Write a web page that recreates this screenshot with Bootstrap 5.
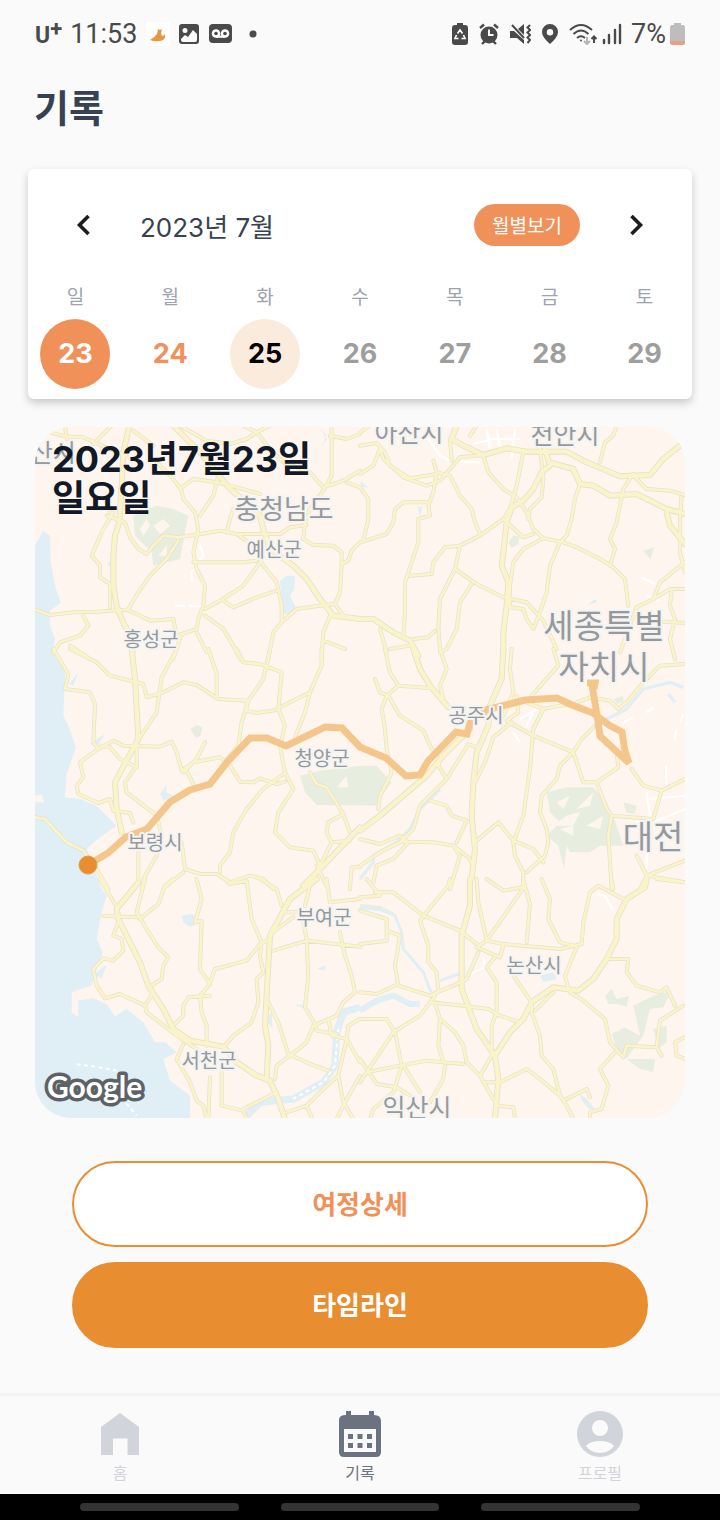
<!DOCTYPE html>
<html lang="ko">
<head>
<meta charset="utf-8">
<meta name="viewport" content="width=device-width, initial-scale=1">
<title>기록</title>
<link href="https://cdn.jsdelivr.net/npm/bootstrap@5.3.0/dist/css/bootstrap.min.css" rel="stylesheet">
<style>
  :root { --coral: #f0915a; --amber: #e88e31; --ink: #374151; --page: #fafafa; }
  body { background: var(--page); color: var(--ink); font-family: Inter, "Noto Sans CJK KR", sans-serif; }
  svg { display: block; flex: none; }
  .status-bar { height: 68px; padding: 0 35px; font: 400 27px/32px Roboto, sans-serif; color: #4a4a4a; }
  .carrier { font-size: 23px; font-weight: 700; line-height: 32px; padding-top: 4px; }
  .carrier sup { font-size: 22px; top: -7px; line-height: 0; }
  .page-title { font-size: 38px; font-weight: 700; line-height: 76px; padding: 2px 34px 0; }
  .week-card { margin: 23px 28px 0; padding: 28px 0 10px; border: 0; border-radius: 6px; box-shadow: 0 4px 9px rgba(0,0,0,.2); }
  .week-head { padding: 0 28px; gap: 28px; }
  .arrow-btn { width: 56px; height: 56px; padding: 0; display: grid; place-items: center; }
  .month-label { font-size: 26px; line-height: 32px; padding-top: 6px; }
  .month-btn { height: 42px; padding: 3px 18px 0; border: 0; border-radius: 21px; background: var(--coral); color: #fff; font-size: 19px; line-height: 39px; }
  .week-grid { table-layout: fixed; width: 100%; margin-top: 29px; text-align: center; }
  .week-grid th { font-size: 19px; font-weight: 400; line-height: 32px; padding: 0 0 5px; color: #9ca3af; }
  .week-grid td { padding: 0; }
  .day { width: 70px; height: 70px; padding: 0; border-radius: 50%; font-size: 27px; font-weight: 700; color: #9e9e9e; border: 0; }
  .day.chosen { background: var(--coral); color: #fff; }
  .day.past { color: var(--coral); }
  .day.today { background: #faebdc; color: #000; }
  .map-box { margin: 28px 35px 0; border-radius: 36px; overflow: hidden; }
  .map-box svg { width: 100%; height: auto; }
  .map-date { top: 13px; left: 17px; font-size: 36px; font-weight: 700; line-height: 39px; color: #111827; }
  .actions { padding: 43px 10% 0; gap: 15px; }
  .action-btn { height: 86px; border-radius: 43px; font-size: 26px; font-weight: 700; border: 2px solid var(--amber); background: #fff; color: var(--coral); }
  .action-btn.filled { background: var(--amber); color: #fff; }
  .tab-bar { border-top: 3px solid #f3f3f3; height: 101px; }
  .tab-link { color: #d1d5db; font-size: 16px; line-height: 24px; text-decoration: none; padding-top: 12px; gap: 3px; }
  .tab-link.current { color: #6b7280; }
  .sys-bar { background: #000; height: 26px; gap: 42px; }
  .sys-bar span { width: 22%; height: 8px; border-radius: 4px; background: #333; }
  /* map layers */
  .land { fill: #fef6ee; } .sea, .lake { fill: #e0eef5; } .park { fill: #e7eedf; }
  .river { fill: none; stroke: #e0eef5; stroke-linejoin: round; }
  .street { fill: none; stroke: #fff; stroke-width: 6; }
  .roads { fill: none; stroke-linejoin: round; stroke-linecap: round; }
  .casing { stroke: #e6dfcb; --minor: 12px; --major: 18px; }
  .surface { stroke: #faf4c8; --minor: 8px; --major: 13px; }
  .lane { stroke-width: var(--minor); } .trunk { stroke-width: var(--major); }
  .trip { fill: none; stroke: #f5c68b; stroke-width: 7; }
  .places { font-family: "Noto Sans CJK KR", sans-serif; fill: #98989b; stroke: #f3f4f4; stroke-width: 4; paint-order: stroke; text-anchor: middle; stroke-linejoin: round; }
  .p-s { font-size: 20px; } .p-m { font-size: 25px; } .p-l { font-size: 27px; } .p-xl { font-size: 33px; }
  .maker { font-family: Lato, sans-serif; font-weight: 700; font-size: 30px; fill: #fff; stroke: #5d6266; stroke-width: 7; paint-order: stroke; stroke-linejoin: round; }
</style>
</head>
<body>
<div class="d-flex flex-column min-vh-100">
  <div class="status-bar d-flex align-items-center justify-content-between">
    <div class="d-flex align-items-center">
      <span class="carrier">U<sup>+</sup></span><span class="ms-2">11:53</span>
      <svg class="ms-2" width="26" height="26" viewBox="0 0 26 26"><rect x="1" y="1" width="24" height="24" fill="#fff"/><path d="M5 19q5-3 7-6l1-5 2 1 2-1-1 4 1 3q2 0 3-2 1 6-5 7-5 1-10-1Z" fill="#e8963f"/></svg>
      <svg class="ms-2" width="20" height="20" viewBox="0 0 20 20"><path fill="#4a4a4a" fill-rule="evenodd" d="M3 0h14q3 0 3 3v14q0 3-3 3H3q-3 0-3-3V3q0-3 3-3Zm3 4a2 2 0 1 0 0 5 2 2 0 0 0 0-5ZM2 16q0 2 2 2h12q2 0 2-2V10l-4-4-5 7-3-2-4 4Z"/></svg>
      <svg class="ms-2" width="26" height="20" viewBox="-2 0 26 20"><rect width="23" height="19" rx="4" fill="#4a4a4a"/><g fill="#fff"><circle cx="7" cy="9.500" r="4.300"/><circle cx="16" cy="9.500" r="4.300"/><path d="M7 11.500h9v2.300H7z"/></g><g fill="#4a4a4a"><circle cx="7" cy="9.500" r="1.800"/><circle cx="16" cy="9.500" r="1.800"/></g></svg>
      <svg class="ms-3" width="8" height="8" viewBox="0 0 8 8"><circle cx="4" cy="4" r="3.500" fill="#4a4a4a"/></svg>
    </div>
    <div class="d-flex align-items-center">
      <svg width="16" height="22" viewBox="0 0 16 22"><path fill="#4a4a4a" d="M5 0h6v2h2q3 0 3 3v14q0 3-3 3H3q-3 0-3-3V5q0-3 3-3h2Z"/><path d="m5.500 10.500 2.500-3.500 2.500 3.500m1 1.500 1.500 3.500H9.500m-3 0H3l1.500-3.500" fill="none" stroke="#fff" stroke-width="1.600"/></svg>
      <svg class="ms-2" width="26" height="22" viewBox="-4 0 26 22"><circle cx="9" cy="12" r="8.500" fill="#4a4a4a"/><path d="m0 5 4-3.500M18 5l-4-3.500M2 21l3-3M16 21l-3-3" stroke="#4a4a4a" stroke-width="2.400"/><path d="M9 6.500V12h4.500" stroke="#fff" stroke-width="2" fill="none"/></svg>
      <svg class="ms-2" width="21" height="22" viewBox="0 0 21 22"><path fill="#4a4a4a" d="M0 8h4l10 9v4l-7-6H0ZM8 6l6-5v11Z"/><path d="m2 2 12 13M20 2l-2.500 2.500L20 7l-2.500 2.500L20 12l-2.500 2.500L20 17l-2.500 3" stroke="#4a4a4a" stroke-width="2" fill="none"/></svg>
      <svg class="ms-2" width="22" height="22" viewBox="0 0 22 22"><path fill="#4a4a4a" fill-rule="evenodd" d="M11 1a8 8 0 0 1 8 8q0 5-8 12Q3 14 3 9a8 8 0 0 1 8-8Zm0 5a3 3 0 1 0 0 6.500A3 3 0 0 0 11 6Z"/></svg>
      <svg class="ms-2" width="28" height="22" viewBox="0 0 28 22" fill="none" stroke="#4a4a4a" stroke-width="2"><path d="M1 7q11-10 22 0M4.500 11q7.500-7 15 0M8 15q4-3.500 8 0"/><circle cx="12" cy="17.500" r="1" fill="#4a4a4a" stroke="none"/><path d="M18 14v6m-3-2 3 3 3-3" stroke="#b5b5b5"/><path d="M25 20v-6m-2.500 2 2.500-2.500 2.500 2.500"/></svg>
      <svg class="ms-1" width="22" height="22" viewBox="0 0 22 22"><path d="M3 17v3M8 12v8M14 7v13M19 2v18" stroke="#4a4a4a" stroke-width="2.400" stroke-linecap="round"/></svg>
      <span class="ms-2">7%</span>
      <svg class="ms-1" width="15" height="22" viewBox="0 0 15 22"><path fill="#bdbdbd" d="M4 0h7v2h2q2 0 2 3v14q0 3-3 3H3q-3 0-3-3V5q0-3 2-3h2Z"/><path fill="#e5a085" d="M0 18h15v1q0 3-3 3H3q-3 0-3-3Z"/></svg>
    </div>
  </div>

  <main class="flex-grow-1">
    <h1 class="page-title m-0">기록</h1>

    <section class="card week-card">
      <div class="week-head d-flex align-items-center">
        <button class="btn arrow-btn" type="button" aria-label="이전 주"><svg width="16" height="22" viewBox="0 0 16 22"><path d="m12.500 2-9 9 9 9" fill="none" stroke="#1c1c1e" stroke-width="3.600"/></svg></button>
        <div class="month-label flex-grow-1">2023년 7월</div>
        <button class="btn month-btn" type="button">월별보기</button>
        <button class="btn arrow-btn" type="button" aria-label="다음 주"><svg width="16" height="22" viewBox="0 0 16 22"><path d="m3.500 2 9 9-9 9" fill="none" stroke="#1c1c1e" stroke-width="3.600"/></svg></button>
      </div>
      <table class="week-grid">
        <thead><tr><th scope="col">일</th><th scope="col">월</th><th scope="col">화</th><th scope="col">수</th><th scope="col">목</th><th scope="col">금</th><th scope="col">토</th></tr></thead>
        <tbody><tr>
          <td><button class="btn day chosen" type="button">23</button></td>
          <td><button class="btn day past" type="button">24</button></td>
          <td><button class="btn day today" type="button">25</button></td>
          <td><button class="btn day" type="button">26</button></td>
          <td><button class="btn day" type="button">27</button></td>
          <td><button class="btn day" type="button">28</button></td>
          <td><button class="btn day" type="button">29</button></td>
        </tr></tbody>
      </table>
    </section>

    <section class="map-box position-relative">
      <svg viewBox="35 428 650 691" role="img" aria-label="이동 경로 지도">
        <defs>
          <g id="road-net">
            <g transform="translate(30 420) scale(.3333)">
              <path class="trunk" d="M298 20 280 100 275 200 268 310 255 350 250 410 250 500 260 560 275 600 300 650 308 700M430 20 470 60 510 100 560 160 600 210 660 260 690 290 700 330 720 390 790 440 830 480 870 540 910 590 990 600"/>
              <path class="lane" d="M60 40 105 52 160 55 250 95 290 110M105 20 110 60M190 75 245 20M310 35 370 80M225 240 245 290M250 280 215 340 185 410 210 440 210 475 240 495 240 565M230 290 285 310 300 355 325 390 350 405 370 380 400 350 445 355 500 347 570 335 620 345 700 345 750 345 780 325 830 318M370 120 410 160 430 180 455 215 460 240 495 280 505 330 490 400 500 450 525 500 520 560 505 600 500 630 440 650 430 600 360 605 320 585 290 572 200 578 130 580 60 588 15 572M445 365 410 420 360 470 325 520 295 570M455 205 490 180 560 190 620 205 690 225M565 170 550 230 510 290M450 20 530 65 600 75 650 60 680 40 720 20M640 20 680 40 720 90 760 130 840 160 880 205 940 185 990 155M905 20 905 170 880 215 840 270 825 310 820 360 850 378 910 380 935 400 935 440 930 520 915 555M900 50 950 60 990 45M950 190 990 205M990 370 965 395 955 425 935 435M490 430 570 430 640 430 680 425M690 430 640 500 610 520 570 545 525 570M580 545 610 565 680 535 740 515M680 400 700 440 740 490 755 560 755 610 800 570 870 560 915 555 940 590M525 590 580 630 610 680 630 720M900 590 880 640 875 720M880 665 945 690M755 610 730 640 715 720M590 340 600 300 610 270M620 345 670 380M160 590 175 620 150 650 90 670 70 700M120 680 180 720M455 645 430 720M500 640 530 700"/>
            </g>
            <g transform="translate(360 420) scale(.3333)">
              <path class="trunk" d="M555 90 570 140 545 160 520 210 490 245 455 265 440 310 430 400 425 440 445 490 440 560 430 640 430 700M570 130 640 150 660 195 700 200 750 230 830 225 920 270 975 285M290 20 275 60 320 85 370 108 440 88 500 98 620 98 680 130 780 172 870 168 910 120 960 80M0 600 40 600 100 640 150 665 175 710M920 280 930 320 975 375"/>
              <path class="lane" d="M270 60 275 125M370 108 300 115 270 150 240 185 200 200 130 175 70 120 60 90 40 140 0 165M0 80 50 72 75 100 90 140 150 178 230 165M220 125 230 160 270 170 300 230 335 270 345 310 360 345M0 40 30 20M330 50 350 20M230 160 220 220 205 260 210 290 175 300 175 370 135 490 135 580 130 650M205 250 130 250 105 270 100 310 80 345 0 370M0 205 25 240 25 300 10 365M965 225 960 300 960 400 975 460M370 110 385 160 430 210 470 235 500 280 520 330 550 358 610 370 650 385 720 420 760 445 795 480 805 560M490 100 470 200 450 270 430 300 360 350 300 380 285 450 240 540 235 630 240 690M540 90 550 180 545 235 510 270 505 300M550 358 490 390 460 430 450 500 450 560M430 300 490 355 520 345M660 195 645 240 635 300 620 350 600 370 570 440 560 520 540 580 520 630 500 600 490 570 450 565M820 165 790 210 770 310 750 360 765 390 750 440M820 170 860 210 930 215 975 228M770 20 760 50 735 70 720 130M300 380 255 385 220 430 215 465 150 470M285 450 350 495 430 535 500 550 550 605 590 690M335 495 300 550 290 630 260 690 240 700M60 630 80 700M225 635 205 655 160 660M90 690 150 680M830 565 880 540 930 510 975 510M975 430 900 490 880 540M935 515 930 560 945 600 930 660 945 720M910 608 975 612M830 565 810 620 780 700"/>
            </g>
            <g transform="translate(30 650) scale(.3333)">
              <path class="trunk" d="M305 0 315 90 325 270 255 400 260 480 275 550M990 535 880 650 820 710"/>
              <path class="lane" d="M70 0 115 75 105 120 180 130 195 165 190 280 205 300 150 340 160 385 140 410 145 435 205 462 240 450 250 485 300 492 310 520M205 300 250 275 280 290 390 293 425 278 440 310 455 365 490 340 570 325 600 350 630 398 670 400 690 388 740 405 765 398M215 290 240 295 270 330 320 355M320 280 320 350 285 400 290 430 380 500 395 560 380 620 345 680 335 720M120 0 200 40 240 80 340 105 350 145 400 130 460 100 500 108 565 150 650 155 650 185 680 192 745 182M435 10 395 85 380 190 330 265M535 0 560 75 560 140M720 0 700 90 655 155 635 220 625 290 590 330M620 0 640 40 690 45 755 70 745 180 765 230 750 290 765 370 790 420 745 490 735 550 780 595 850 605 870 650M875 0 875 50 840 130 750 175M840 130 825 190 795 265M525 280 500 330 460 370M470 365 490 405M760 375 700 420 650 480 610 550 600 610 570 650 570 670M455 580 465 660 510 675 560 675 600 700 660 680 700 690 730 720M840 370 860 405 890 415 940 495 960 550M940 495 895 520 890 550 905 580 960 575M905 580 870 650M860 650 895 720M960 720 965 655 990 655M15 505 45 510 110 580 160 605 200 660 235 720M325 590 325 700M405 715 460 670"/>
            </g>
            <g transform="translate(360 650) scale(.3333)">
              <path class="trunk" d="M430 0 425 90 390 170 385 230 350 310 340 400 335 500 345 600 335 690M160 0 180 60 210 110 265 175M0 545 60 500 130 440 200 380 250 320 330 240"/>
              <path class="lane" d="M455 0 450 60 460 130 430 200M75 0 90 70 115 110 220 118M115 110 80 140 65 180 75 240 80 300 95 370 60 440 55 480M45 90 60 130 85 140 120 200 190 245 215 300 245 320 235 350 260 390M240 0 260 60 240 110 250 150M515 140 595 50 580 0M350 295 325 285 260 390 180 470 160 540 120 580 60 610 0 650M455 220 400 265 375 340 345 400M470 140 475 190 440 215 520 260 640 310 665 270 700 235M550 180 520 240 510 360 490 500 460 580 465 620 490 670 490 720M640 310 600 350 590 390 545 440 540 490 560 540 565 580 555 620 500 670M640 310 670 400 710 400 775 355 770 310M710 400 740 480 755 500 745 560 755 720M755 500 880 510 905 425 850 410 815 360M905 425 975 390M830 620 860 680 975 635M860 680 975 700M860 680 840 720M640 165 690 145 750 155 775 180 800 160 850 100 900 50 975 45M470 150 550 180 600 170 640 165M210 455 260 470 275 500 320 515 290 580M130 578 220 580 280 590 325 625 340 650M280 590 300 620 270 720M350 575 415 520 460 575 520 600 550 640M0 570 60 585 120 560 145 580 100 630 50 650 40 700"/>
            </g>
            <g transform="translate(30 880) scale(.3333)">
              <path class="trunk" d="M325 10 260 90 265 120 330 250 355 320 400 390 430 450 480 485 580 503 620 550 680 590 720 605 745 660 765 720M860 0 780 60 720 170 705 440 715 500 710 600"/>
              <path class="lane" d="M210 0 260 85M345 0 320 100 350 150 385 205 415 235 400 260 395 300 365 320M330 120 385 75 405 20 430 0M220 110 320 115M265 130 250 170 275 180 280 215 250 245 220 238 190 270 200 320 225 358 270 345 345 380 350 400 440 470 500 510M345 380 370 340M500 0 515 60 495 130 515 125 510 270 540 315 510 350 515 400 530 440 530 500M540 350 475 355 460 380 460 410 435 435M540 310 555 270 650 245 690 195 720 180M585 0 600 15 650 5 665 120 695 190 690 230 700 280 680 300 685 370 665 430 610 470 585 500M690 0 740 30 755 80M760 100 800 100M730 215 830 185 990 203M820 130 830 180 835 290 825 385 855 435 860 455 920 465M720 165 790 115M840 20 825 80M890 0 900 70 990 60M930 160 945 230 965 290 975 340 940 370 920 410 850 440 830 490 780 530 740 560 735 600M715 370 745 430 775 525 840 555 895 575M895 420 905 470 950 480 990 550M990 420 955 440 950 480 925 590 870 640 830 680 770 700M925 590 940 670 970 720M990 590 945 670 920 720M830 680 845 715M460 495 440 540 480 610 500 665 520 680 530 720M540 595 535 720M575 580 575 680 640 695 650 720M640 690 740 640"/>
            </g>
            <g transform="translate(360 880) scale(.3333)">
              <path class="trunk" d="M330 0 330 80 305 170 305 330 350 450 405 530 415 600 405 720M860 0 855 25 800 60 770 120 770 180 740 240 700 300 655 335 580 325 515 370 490 420 450 460 405 530"/>
              <path class="lane" d="M350 0 355 70 380 185M490 0 495 20 380 185 350 205M45 40 100 40 190 110 300 155 350 195M380 185 430 195 600 210 665 195 670 130 690 40 715 20 790 60M495 20 510 75 500 190M380 0 430 35 490 25M545 0 570 60 565 120 600 190 640 200M650 205 615 290 625 330M0 55 60 50 20 0M270 0 265 20 215 80 180 125 205 200 205 250 230 280 235 340M0 95 80 120 80 185 0 195M80 155 120 170 105 260 115 320 210 350 230 340 280 320 320 300 355 220M0 340 50 345 115 315M210 370 310 380 385 390 420 410 480 430M225 350 180 410 100 460 20 580 0 610M0 420 80 420 105 460 125 560 100 640 40 690 30 720M225 370 240 420 235 500 250 550M240 420 285 460 310 500 320 550 360 590 400 660M20 580 120 560 200 545 310 555M0 540 50 615 110 625 150 650M130 560 180 640M255 560 250 600 210 670M405 235 380 265 410 310 410 400 395 440 395 530 360 590M350 205 420 235 430 200M460 290 515 370 515 400 540 470 545 530 580 570 600 650 620 680 640 720M580 340 525 395M420 610 500 570 540 600 600 650M610 665 680 630 690 655M370 610 410 610M415 680 460 685 465 720M630 340 670 365 735 420 750 490 790 535 800 500 890 505 900 425 970 380M765 520 720 570 745 620 725 690 690 700 690 720M750 240 805 240 800 280 830 320 900 340 920 325 945 380M890 505 905 530M975 475 945 490 950 530 975 540M755 0 760 30M890 0 975 10"/>
            </g>
          </g>
        </defs>
        <rect class="land" x="35" y="428" width="650" height="691"/>
        <!-- sea, lakes and parks -->
        <g transform="translate(30 420) scale(.3333)">
          <path class="sea" d="M15 380 40 335 60 350 62 430 75 500 92 552 60 575 60 620 75 660 70 690 105 760 100 890 115 920 138 985 110 1065 105 1135 150 1140 200 1160 260 1220 210 1255 170 1290 215 1410 230 1430 215 1480 200 1560 218 1600 185 1700 125 1720 125 1780 145 1795 145 1745 190 1738 230 1755 255 1793 290 1770 340 1810 375 1870 405 1870 440 1900 400 1920 420 1985 480 2030 480 2100 15 2100Z"/>
          <path class="land" d="M15 1130 35 1125 42 1150 15 1150Z"/>
          <path class="lake" d="M750 485 770 470 795 470 793 510 780 530 795 560 795 585 760 585ZM232 430 245 430 238 445ZM118 795 145 760 130 800ZM180 975 225 945 200 985ZM390 1125 412 1095 408 1120 430 1130 400 1145ZM455 1490 490 1485 500 1515 480 1525 460 1510ZM195 1665 230 1635 215 1680ZM705 1800 725 1780 728 1830ZM790 1755 820 1760 825 1770ZM860 1650 885 1640 885 1655ZM870 24 890 50 870 90 890 60ZM200 75 225 75 215 90Z"/>
          <path class="park" d="M310 290 380 260 430 270 475 290 450 420 370 440 365 400 315 350ZM480 930 500 918 518 925 512 950 498 957ZM810 1070 870 1055 990 1040 1040 1040 1085 1090 1050 1140 1045 1160 860 1158 825 1120Z"/>
          <path class="land" d="M330 330 350 300 360 320 340 350ZM370 320 400 300 420 320 390 345ZM385 410 410 380 410 410ZM920 1105 950 1070 955 1105Z"/>
          <path class="river" stroke-width="22" d="M990 1765 940 1780 920 1840 915 1940 880 1990 790 2040 690 2050 650 2090"/>
          <path class="street" stroke-dasharray="12 10" d="M140 1936 190 1942 260 1955M260 2020 320 2090M925 1830 915 1940 880 1990 790 2040"/>
          <path class="street" d="M435 560 465 560M475 560 520 562M485 490 485 455 500 450M510 380 520 410 505 430"/>
        </g>
        <g transform="translate(360 420) scale(.3333)">
          <path class="park" d="M445 370 460 350 480 352 475 375 455 388ZM850 395 882 385 872 422Z"/>
          <path class="lake" d="M680 560 705 540 712 548ZM172 265 188 262 180 290ZM0 185 25 205 5 205Z"/>
          <path class="street" d="M205 60 240 110 270 125M300 128 360 130M380 30 390 90M410 30 420 85M340 75 400 60 480 60M465 30 455 120M845 475 885 495M860 530 900 545"/>
        </g>
        <g transform="translate(360 650) scale(.3333)">
          <path class="park" d="M560 430 620 415 700 415 740 460 760 500 790 590 720 590 690 610 630 610 620 590 612 660 595 590 560 560 600 520 570 490ZM760 150 790 140 790 160 770 165ZM790 460 830 470 825 495 800 492Z"/>
          <path class="land" d="M590 460 630 440 610 480ZM580 530 620 500 660 490 640 530ZM650 480 700 430 690 470ZM680 530 730 500 720 540ZM600 540 640 530 640 560Z"/>
          <path class="river" stroke-width="10" d="M240 420 180 480 150 540 110 580 40 620 40 640 0 690M440 220 520 260M700 230 800 180 850 120 930 100 970 115M925 135 945 160"/>
          <path class="street" d="M480 210 530 180M500 230 520 190M460 250 480 280M720 240 760 220M790 220 820 205M860 190 880 175M970 195 960 220M950 240 945 270M918 350 918 410M860 430 870 500 830 520M870 450 975 440M880 520 975 480M860 600 860 660"/>
        </g>
        <g transform="translate(360 880) scale(.3333)">
          <path class="park" d="M735 350 755 330 770 360 808 350 800 385 775 375 745 375ZM820 380 880 350 935 335 910 385 870 390 860 430 850 470 820 510 800 540 770 510 755 465 795 445 840 470ZM880 450 920 440 920 490 895 510ZM800 540 885 540 880 580 840 570ZM0 75 60 80 110 105 60 95 0 90Z"/>
          <path class="lake" d="M540 290 580 280 590 300 550 308ZM660 645 680 660 705 690 690 692 665 665Z"/>
          <path class="river" stroke-width="9" d="M0 85 60 92 105 110 125 160 130 210 190 280 213 340M240 305 310 280"/>
          <path class="river" stroke-width="18" d="M0 395 50 365 100 350 150 375 180 375"/>
          <path class="street" d="M710 45 735 50 760 95M320 290 375 265 370 235"/>
        </g>
        <use class="roads casing" href="#road-net"/>
        <use class="roads surface" href="#road-net"/>
        <path class="trip" d="M88 866 108 854 126 838 147 830 170 803 190 791 210 785 228 762 250 739 267 739 286 747 325 728 342 729 360 748 386 759 406 777 420 776 428 762 456 733 467 735 470 724 486 711 510 705 525 701 557 699 572 706 593 714 609 726 622 733 625 752 629 764 600 737 598 722 592 686M587 684 595 684 594 690"/>
        <circle cx="88" cy="866" r="9" fill="#e88e31" stroke="#dda045"/>
        <g class="places">
          <text class="p-m" x="409" y="443">아산시</text><text class="p-m" x="565" y="445">천안시</text>
          <text class="p-m" x="53" y="463">산시</text>
          <text class="p-l" x="284" y="520">충청남도</text><text class="p-s" x="274" y="558">예산군</text>
          <text class="p-s" x="151" y="648">홍성군</text><text class="p-xl" x="604" y="639">세종특별</text>
          <text class="p-xl" x="604" y="680">자치시</text><text class="p-s" x="476" y="724">공주시</text>
          <text class="p-s" x="322" y="767">청양군</text><text class="p-s" x="155" y="851">보령시</text>
          <text class="p-xl" x="653" y="850">대전</text><text class="p-s" x="324" y="926">부여군</text>
          <text class="p-s" x="534" y="974">논산시</text><text class="p-s" x="209" y="1069">서천군</text>
          <text class="p-m" x="417" y="1118">익산시</text>
        </g>
        <text class="maker" x="47" y="1099">Google</text>
      </svg>
      <h2 class="map-date position-absolute m-0">2023년7월23일<br>일요일</h2>
    </section>

    <div class="actions d-flex flex-column">
      <button class="btn action-btn" type="button">여정상세</button>
      <button class="btn action-btn filled" type="button">타임라인</button>
    </div>
  </main>

  <nav class="tab-bar row g-0" aria-label="하단 메뉴">
    <a class="tab-link col d-flex flex-column align-items-center" href="#home"><svg width="48" height="50" viewBox="0 0 48 50"><path fill="currentColor" d="M24 5 43 19v28H31.500V30.500H17V47H5V19Z"/></svg>홈</a>
    <a class="tab-link current col d-flex flex-column align-items-center" href="#record" aria-current="page"><svg width="48" height="50" viewBox="0 0 48 50"><path fill="currentColor" fill-rule="evenodd" d="M10 3h5v4h18V3h5v4q7 0 7 6v31q0 5-5 5H8q-5 0-5-5V12q0-5 7-5ZM8 21v23h32V21Zm4 5h5v5h-5Zm9.500 0h5v5h-5Zm9.500 0h5v5h-5ZM12 35h5v5h-5Zm9.500 0h5v5h-5Zm9.500 0h5v5h-5Z"/></svg>기록</a>
    <a class="tab-link col d-flex flex-column align-items-center" href="#profile"><svg width="48" height="50" viewBox="0 0 48 50"><path fill="currentColor" fill-rule="evenodd" d="M24 3a23 23 0 1 1 0 46 23 23 0 0 1 0-46Zm0 9a8 8 0 1 0 0 16 8 8 0 0 0 0-16ZM10 38q5 7 14 7t14-7q-4-5-14-5t-14 5Z"/></svg>프로필</a>
  </nav>
  <div class="sys-bar d-flex justify-content-center align-items-center"><span></span><span></span><span></span></div>
</div>
<script src="https://cdn.jsdelivr.net/npm/bootstrap@5.3.0/dist/js/bootstrap.bundle.min.js"></script>
</body>
</html>
